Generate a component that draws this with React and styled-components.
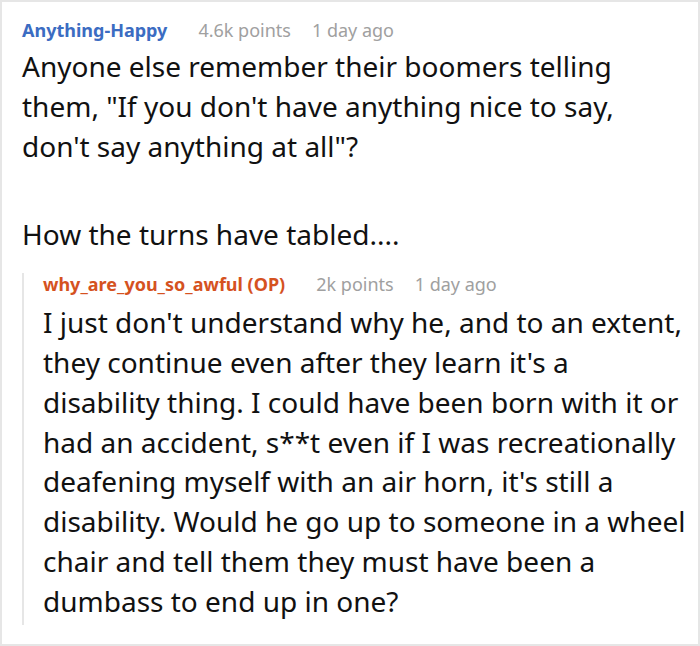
import React from "react";
import styled, { createGlobalStyle } from "styled-components";

const GlobalStyle = createGlobalStyle`
  html, body {
    margin: 0;
    padding: 0;
    background: #ffffff;
  }
  body {
    font-family: "Noto Sans", "Open Sans", sans-serif;
  }
`;

const comment = {
  author: "Anything-Happy",
  points: "4.6k points",
  time: "1 day ago",
  paragraphs: [
    `Anyone else remember their boomers telling them, "If you don't have anything nice to say, don't say anything at all"?`,
    "How the turns have tabled....",
  ],
  reply: {
    author: "why_are_you_so_awful (OP)",
    points: "2k points",
    time: "1 day ago",
    paragraphs: [
      "I just don't understand why he, and to an extent, they continue even after they learn it's a disability thing. I could have been born with it or had an accident, s**t even if I was recreationally deafening myself with an air horn, it's still a disability. Would he go up to someone in a wheel chair and tell them they must have been a dumbass to end up in one?",
    ],
  },
};

const App = () => {
  const { reply } = comment;
  return (
    <>
      <GlobalStyle />
      <Card>
        <Meta>
          <Author>{comment.author}</Author>
          <Points>{comment.points}</Points>
          <MetaInfo>{comment.time}</MetaInfo>
        </Meta>
        <Body $inset={10}>
          {comment.paragraphs.map((p, idx) => (
            <Paragraph key={idx}>{p}</Paragraph>
          ))}
        </Body>
        <Reply>
          <Meta>
            <Author op>{reply.author}</Author>
            <Points>{reply.points}</Points>
            <MetaInfo>{reply.time}</MetaInfo>
          </Meta>
          <Body $gap={8}>
            {reply.paragraphs.map((p, idx) => (
              <Paragraph key={idx}>{p}</Paragraph>
            ))}
          </Body>
        </Reply>
      </Card>
    </>
  );
};

export default App;

const Card = styled.div`
  box-sizing: border-box;
  width: 700px;
  height: 646px;
  border: 2px solid #e6e6e6;
  padding: 17px 6px 0 20px;
  background: #fff;
  overflow: hidden;
`;

const Meta = styled.div`
  display: flex;
  align-items: baseline;
  font-size: 18px;
  line-height: 22px;
`;

const Author = styled.span`
  font-weight: 700;
  margin-right: 31px;
  color: ${(p) => (p.op ? "#d5521f" : "#3b6cc2")};
`;

const MetaInfo = styled.span`
  color: #a0a0a0;
`;

const Points = styled(MetaInfo)`
  margin-right: 21px;
`;

const Body = styled.div`
  margin-top: ${(p) => p.$gap || 6}px;
  padding-right: ${(p) => p.$inset || 0}px;
`;

const Paragraph = styled.p`
  margin: 0 0 49px 0;
  font-size: 28px;
  line-height: 39.8px;
  color: #111;

  &:last-child {
    margin-bottom: 0;
  }
`;

const Reply = styled.div`
  margin-top: 18px;
  border-left: 2px solid #e6e6e6;
  padding-left: 19px;
  padding-bottom: 3px;
`;
